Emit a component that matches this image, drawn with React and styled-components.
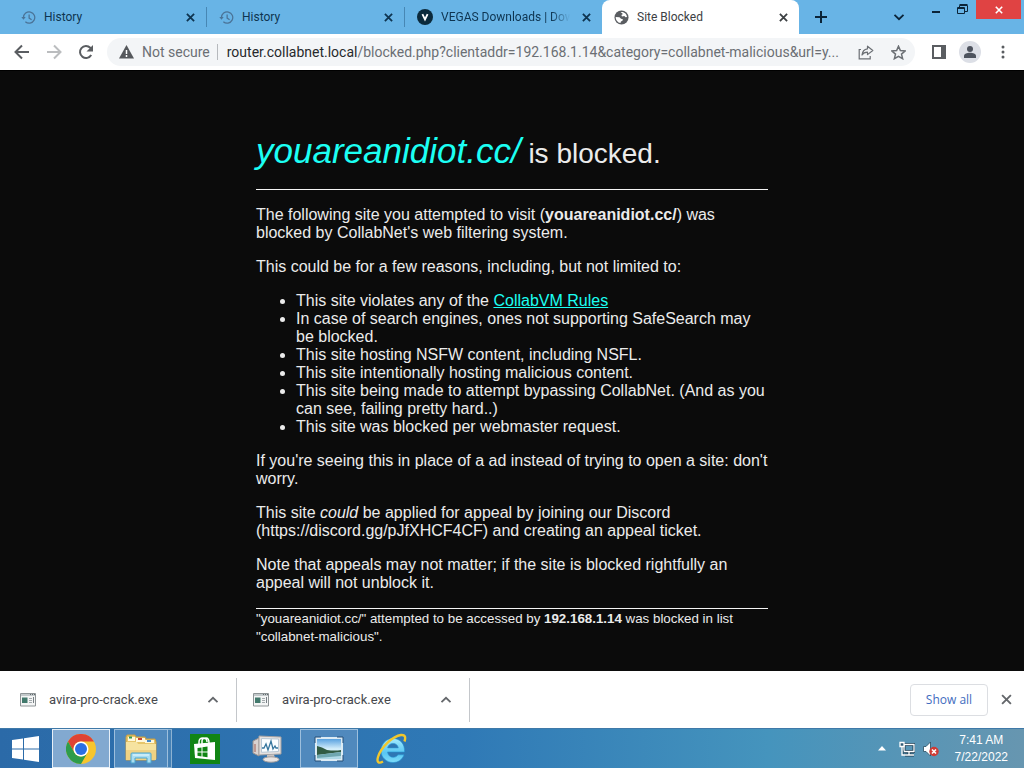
import React from 'react';
import styled, { createGlobalStyle, ThemeProvider } from 'styled-components';

const theme = {
  colors: {
    frame: '#68b4e6',
    page: '#0b0b0b',
    pageText: '#ebebeb',
    cyan: '#1cfff3',
    navy: '#0e3450',
    toolbar: '#ffffff',
    omnibox: '#f3f5f7',
    icon: '#5a5d61',
    grey: '#6b6f74',
    line: '#c4c7cb',
  },
  fonts: {
    ui: '"Open Sans", "Noto Sans", sans-serif',
    narrow: 'Roboto, "Open Sans", sans-serif',
    page: '"Liberation Sans", Arial, sans-serif',
  },
};

const GlobalStyle = createGlobalStyle`
  * {
    box-sizing: border-box;
  }

  body {
    margin: 0;
    background-color: #0b0b0b;
  }

  button, input {
    padding: 0;
    border: 0;
    background: none;
    font: inherit;
    color: inherit;
  }

  svg {
    display: block;
    flex: none;
  }
`;

const Desktop = styled.div`
  display: flex;
  flex-direction: column;
  min-height: 100vh;
  font-family: ${props => props.theme.fonts.ui};
`;

const TabStrip = styled.div`
  display: flex;
  align-items: flex-start;
  height: 34px;
  background-color: ${props => props.theme.colors.frame};
`;

const Tab = styled.div`
  display: flex;
  align-items: center;
  flex: 0 1 197px;
  min-width: 0;
  height: 34px;
  padding: 0 8px 0 12px;
  border-radius: ${props => (props.$active ? '8px 8px 0 0' : '0')};
  background-color: ${props => (props.$active ? props.theme.colors.toolbar : 'transparent')};
  color: ${props => (props.$active ? '#3c4043' : props.theme.colors.navy)};
  font-family: ${props => props.theme.fonts.narrow};
  font-size: 12px;

  &:first-child {
    flex-basis: 206px;
    padding-left: 21px;
  }
`;

const TabTitle = styled.button`
  flex: 1;
  min-width: 0;
  margin: 0 8px;
  overflow: hidden;
  text-align: left;
  white-space: nowrap;
  mask-image: ${props => (props.$fade ? 'linear-gradient(to right, #000 85%, transparent)' : 'none')};
`;

const TabDivider = styled.span`
  flex: none;
  width: 1px;
  height: 20px;
  margin-top: 7px;
  background-color: #4787b4;
`;

const IconButton = styled.button`
  display: flex;
  align-items: center;
  justify-content: center;
  flex: none;
  width: ${props => props.$width || 16}px;
  height: ${props => props.$height || 16}px;
  color: ${props => props.$color || 'inherit'};
`;

const StripActions = styled.div`
  display: flex;
  flex: 1;
  align-items: center;
  justify-content: space-between;
  height: 34px;
  padding: 0 16px 0 14px;
  color: #0b2438;
`;

const WindowButtons = styled.div`
  display: flex;
  color: #0b2438;
`;

const CloseWindow = styled.button`
  display: flex;
  align-items: center;
  justify-content: center;
  width: 45px;
  height: 19px;
  margin-right: 3px;
  margin-left: 1px;
  background-color: #e04343;
  color: #fff;
`;

const Toolbar = styled.div`
  display: flex;
  align-items: center;
  height: 37px;
  padding: 0 11px 0 10px;
  border-bottom: 1px solid #000;
  background-color: ${props => props.theme.colors.toolbar};
  color: ${props => props.theme.colors.icon};
`;

const NavButtons = styled.div`
  display: flex;
  gap: 8px;
`;

const Omnibox = styled.div`
  display: flex;
  align-items: center;
  flex: 1;
  min-width: 0;
  height: 28px;
  margin: 0 16px 0 9px;
  padding: 0 9px 0 12px;
  border-radius: 14px;
  background-color: ${props => props.theme.colors.omnibox};
  color: ${props => props.theme.colors.grey};
  font-family: ${props => props.theme.fonts.narrow};
  font-size: 14px;
`;

const SecurityLabel = styled.span`
  margin: 0 7px 0 8px;
  white-space: nowrap;
`;

const OmniboxDivider = styled.span`
  width: 1px;
  height: 16px;
  margin-right: 9px;
  background-color: #b6b9bd;
`;

const Address = styled.div`
  flex: 1;
  min-width: 0;
  white-space: nowrap;

  span {
    color: #27292c;
  }
`;

const OmniboxActions = styled.div`
  display: flex;
  gap: 16px;
  margin-left: 8px;
`;

const ToolbarActions = styled.div`
  display: flex;
  align-items: center;
  gap: 12px;
`;

const Avatar = styled.button`
  display: flex;
  align-items: center;
  justify-content: center;
  width: 22px;
  height: 22px;
  border-radius: 50%;
  background-color: #dcdfe6;
`;

const Page = styled.main`
  flex: 1;
  padding: 59px 0 25px;
  background-color: ${props => props.theme.colors.page};
  color: ${props => props.theme.colors.pageText};
  font-family: ${props => props.theme.fonts.page};
  font-size: 16px;
  line-height: 18px;
`;

const Article = styled.article`
  width: 50%;
  margin: 0 auto;

  p {
    margin: 16px 0;
  }

  ul {
    margin: 16px 0;
    padding-left: 40px;
  }

  a {
    color: ${props => props.theme.colors.cyan};
  }
`;

const Heading = styled.h1`
  margin: 0 0 15px;
  font-size: 28px;
  font-weight: 400;
  line-height: 41px;

  em {
    color: ${props => props.theme.colors.cyan};
    font-size: 35px;
  }
`;

const Rule = styled.hr`
  height: 1px;
  margin: 0;
  border: 0;
  background-color: #f4f4f4;
`;

const Footnote = styled.div`
  padding-top: 1px;
  font-size: smaller;
`;

const DownloadShelf = styled.div`
  display: flex;
  align-items: center;
  height: 57px;
  background-color: #fff;
  color: #47494d;
  font-size: 12px;
`;

const Download = styled.div`
  display: flex;
  align-items: center;
  flex: 0 1 233px;
  height: 44px;
  padding: 0 15px 0 16px;
  border-right: 1px solid ${props => props.theme.colors.line};

  &:first-child {
    flex-basis: 237px;
    padding-left: 20px;
  }
`;

const FileName = styled.button`
  flex: 1;
  margin-left: 13px;
  font-family: ${props => props.theme.fonts.narrow};
  font-size: 13px;
  text-align: left;
`;

const ShelfActions = styled.div`
  display: flex;
  align-items: center;
  gap: 10px;
  margin-left: auto;
  padding-right: 10px;
`;

const ShowAll = styled.button`
  width: 78px;
  height: 32px;
  border: 1px solid #dcdee2;
  border-radius: 4px;
  color: #3f6cc0;
  font-weight: 500;
`;

const Taskbar = styled.div`
  display: flex;
  align-items: stretch;
  height: 40px;
  background: linear-gradient(to right, #2b6aa8, #2f79b6 45%, #4594bd 75%, #6796b0);
  border-top: 1px solid #3f79a8;
`;

const TaskButton = styled.button`
  display: flex;
  align-items: center;
  justify-content: center;
  flex: none;
  width: ${props => props.$width || 58}px;
  margin-right: ${props => props.$gap || 0}px;
  border: 1px solid ${props => (props.$open ? '#9dbfdd' : 'transparent')};
  border-color: ${props => props.$active && '#e6eff7'};
  background-color: ${props => {
    if (props.$active) return '#82a9d0';
    return props.$open ? '#5089bd' : 'transparent';
  }};
`;

const StackEdge = styled.span`
  width: 4px;
  margin-right: 4px;
  border: 1px solid #8db2d2;
  border-left: 0;
  background-color: #4480b5;
`;

const Tray = styled.div`
  display: flex;
  align-items: center;
  margin-left: auto;
  padding-right: 16px;
  color: #fff;
`;

const TrayIcons = styled.div`
  display: flex;
  align-items: center;
  gap: 8px;
  margin-right: 16px;
`;

const Clock = styled.div`
  font-family: ${props => props.theme.fonts.page};
  font-size: 12px;
  line-height: 17px;
  text-align: center;
`;

const HistoryIcon = () => (
  <svg width="15" height="15" viewBox="0 0 24 24" fill="none" stroke="#4a7397" strokeWidth="2">
    <path d="M4 12a9 9 0 1 1 3 6.7" />
    <path d="M0.500 11h7L4 15.500z" fill="#4a7397" stroke="none" />
    <path d="M13 7v6l4 2.500" />
  </svg>
);

const VegasIcon = () => (
  <svg width="16" height="16" viewBox="0 0 16 16">
    <circle cx="8" cy="8" r="8" fill="#0b2a3c" />
    <path d="M5.400 5.200l2.600 5.300 2.600-5.300" fill="none" stroke="#fff" strokeWidth="1.800" />
  </svg>
);

const GlobeIcon = () => (
  <svg width="15" height="15" viewBox="0 0 16 16">
    <circle cx="8" cy="8" r="7.500" fill="#5a5d61" />
    <path d="M7 2.200c3.500-1 6.800 2 6.900 5.300l-1.600.2-1.300-1.200-2.500.3-.6-1.500 1.600-1.100zM1.800 7.400l4 .3 1.700 1.600 2 .5-.5 1.700-1.600.7-.5 1.700c-2.800-.4-5.100-3.200-5.100-6.500z" fill="#fff" />
  </svg>
);

const CrossIcon = ({ size = 9, weight = 2 }) => (
  <svg width={size} height={size} viewBox="0 0 10 10" stroke="currentColor" strokeWidth={weight}>
    <path d="M1 1l8 8M9 1L1 9" />
  </svg>
);

const PlusIcon = () => (
  <svg width="12" height="12" viewBox="0 0 12 12" stroke="currentColor" strokeWidth="2">
    <path d="M6 0v12M0 6h12" />
  </svg>
);

const ChevronIcon = ({ up }) => (
  <svg width="12" height="8" viewBox="0 0 12 8" fill="none" stroke="currentColor" strokeWidth="1.800">
    <path d={up ? 'M1.500 6.200L6 1.800l4.500 4.400' : 'M1.500 1.800L6 6.200l4.500-4.400'} />
  </svg>
);

const MinimizeIcon = () => (
  <svg width="8" height="3" viewBox="0 0 8 3">
    <path d="M0 0h8v2H0z" fill="currentColor" />
  </svg>
);

const RestoreIcon = () => (
  <svg width="11" height="11" viewBox="0 0 11 11" fill="none" stroke="currentColor">
    <path d="M.5 3.500h7v6h-7zM.5 4.500h7M2.500 3V1.500h8v6H8M2.500.5h8" />
  </svg>
);

const ArrowIcon = ({ forward }) => (
  <svg width="16" height="16" viewBox="0 0 16 16" fill="none" stroke="currentColor" strokeWidth="2">
    <path d={forward ? 'M1 8h13M8 1.500L14.500 8 8 14.500' : 'M15 8H2M8 1.500L1.500 8 8 14.500'} />
  </svg>
);

const ReloadIcon = () => (
  <svg width="16" height="16" viewBox="0 0 16 16">
    <path d="M13.200 11A6 6 0 1 1 12.300 3.800L14 5.500" fill="none" stroke="currentColor" strokeWidth="2" />
    <path d="M15 1v6.500H8.500z" fill="currentColor" />
  </svg>
);

const WarningIcon = () => (
  <svg width="15" height="14" viewBox="0 0 15 14">
    <path d="M7.500 0L15 13.500H0z" fill="#55585c" />
    <path d="M7.500 5v4M7.500 10v2" stroke="#fff" strokeWidth="1.500" />
  </svg>
);

const ShareIcon = () => (
  <svg width="16" height="15" viewBox="0 0 16 15" fill="none" stroke="currentColor" strokeWidth="1.200">
    <path d="M3 4.500H1.200v9.300h11V11" />
    <path d="M9.500 1.200L14.800 5.500 9.500 9.600V7.200C7 7.200 5.200 8 4 10c.3-3.300 2.200-5.700 5.500-6.200z" strokeLinejoin="round" />
  </svg>
);

const StarIcon = () => (
  <svg width="15" height="15" viewBox="0 0 16 16" fill="none" stroke="currentColor" strokeWidth="1.600">
    <path d="M8 1.300l2 4.600 5 .5-3.800 3.300 1.200 4.900L8 12l-4.400 2.600 1.200-4.900L1 6.400l5-.5z" />
  </svg>
);

const SidePanelIcon = () => (
  <svg width="14" height="14" viewBox="0 0 14 14">
    <path d="M1 1h12v12H1z" fill="none" stroke="currentColor" strokeWidth="2" />
    <path d="M9 1h4v12H9z" fill="currentColor" />
  </svg>
);

const PersonIcon = () => (
  <svg width="12" height="12" viewBox="0 0 12 12" fill="#4d535e">
    <circle cx="6" cy="3" r="3" />
    <path d="M0 12v-2c0-2 3-3.200 6-3.200s6 1.200 6 3.200v2z" />
  </svg>
);

const MenuIcon = () => (
  <svg width="4" height="14" viewBox="0 0 4 14" fill="currentColor">
    <circle cx="2" cy="2" r="1.500" />
    <circle cx="2" cy="7" r="1.500" />
    <circle cx="2" cy="12" r="1.500" />
  </svg>
);

const ExeIcon = () => (
  <svg width="16" height="14" viewBox="0 0 16 14">
    <path d="M.5.5h15v12.500H.5z" fill="#f4f5f5" stroke="#8e9496" />
    <path d="M1 1h14v2H1z" fill="#c3c9cb" />
    <path d="M10 1.500h1M12 1.500h1M14 1.500h1" stroke="#60686c" />
    <path d="M2 4.500h5.500V10H2z" fill="#42796c" />
    <path d="M9 5.500h3M9 7.500h3M9 9.500h3" stroke="#a3aaad" />
    <path d="M13.500 4v6" stroke="#777f84" />
  </svg>
);

const WindowsIcon = () => (
  <svg width="27" height="26" viewBox="0 0 27 26" fill="#fff">
    <path d="M0 4l11-1.600V12.500H0zM12 2.200L27 0v12.500H12zM0 13.500h11v10.100L0 22zM12 13.500h15V26l-15-2.200z" />
  </svg>
);

const ChromeIcon = () => (
  <svg width="30" height="30" viewBox="0 0 30 30">
    <circle cx="15" cy="15" r="15" fill="#f7c52c" />
    <path d="M2 7.500A15 15 0 0 1 28 7.500H15A7.500 7.500 0 0 0 8.500 18.800z" fill="#df4334" />
    <path d="M2 7.500A15 15 0 0 0 15 30L21.500 18.800A7.500 7.500 0 0 1 8.500 18.800z" fill="#2d9c4b" />
    <circle cx="15" cy="15" r="7.500" fill="#fff" />
    <circle cx="15" cy="15" r="6" fill="#2b6fe3" />
  </svg>
);

const FolderIcon = () => (
  <svg width="32" height="30" viewBox="0 0 32 30">
    <path d="M1 3l1-2h8l1 2h9l1 2h9l1 3v17l-1 1H1z" fill="#e7c66b" stroke="#c69c43" />
    <path d="M3 3h7v4H3zM11 4h9v4h-9zM20 6h9v3h-9z" fill="#fff8dc" />
    <path d="M4 3.500h3" stroke="#2d9b57" strokeWidth="2" />
    <path d="M13 5h4" stroke="#c94335" strokeWidth="2" />
    <path d="M22 7h4" stroke="#4389c9" strokeWidth="2" />
    <path d="M1 8h11l1 2h18v16H1z" fill="#f6e3a0" />
    <path d="M1 16h30v10H1z" fill="#efd283" />
    <path d="M6 29V20q0-1 1-1h18q1 0 1 1v9h-4v-5H10v5z" fill="#a9ddf1" stroke="#4ba5ce" />
    <path d="M8 21h16" stroke="#e9faff" />
  </svg>
);

const StoreIcon = () => (
  <svg width="30" height="30" viewBox="0 0 30 30">
    <path d="M0 0h30v30H0z" fill="#118514" />
    <path d="M9 11V8q0-4 4-4t4 4M12 10V7q0-3 4-3 3 0 3 5" fill="none" stroke="#fff" strokeWidth="1.500" />
    <path d="M4 10l21-2v18L5 24z" fill="#fff" />
    <path d="M7.500 14l4-.6v4h-4zM12.500 13.200l5-.7v4.900h-5zM7.500 18.400h4v4l-4-.6zM12.500 18.400h5v4.900l-5-.7z" fill="#118514" />
  </svg>
);

const MonitorIcon = () => (
  <svg width="30" height="28" viewBox="0 0 30 28">
    <path d="M1 6l6-3v18l-6-3z" fill="#d9d2d0" stroke="#98908f" />
    <path d="M3 9v8" stroke="#a15c52" />
    <path d="M7 1l22 1v17L7 20z" fill="#e5e1df" stroke="#a5a2a2" />
    <path d="M9.500 3.500l17 .5v12.500l-17 .8z" fill="#fafdff" stroke="#b8c8d5" />
    <path d="M10 13h2l2-4 2 6 3-9 2 8 2-3 1 2h2" fill="none" stroke="#36759d" strokeWidth="1.300" />
    <path d="M15 20l7-.5 1 3.500h-8z" fill="#c9c4c2" />
    <ellipse cx="19" cy="24.500" rx="8" ry="2.700" fill="#e8e4e2" stroke="#9c9898" />
  </svg>
);

const PhotoIcon = () => (
  <svg width="30" height="26" viewBox="0 0 30 26">
    <defs>
      <linearGradient id="sky" x2="0" y2="1">
        <stop offset="0" stopColor="#4d9add" />
        <stop offset="0.500" stopColor="#d5effb" />
        <stop offset="1" stopColor="#a6d4e2" />
      </linearGradient>
    </defs>
    <path d="M2 2h26v22H2z" fill="url(#sky)" stroke="#dcebf4" strokeWidth="2" />
    <path d="M3 10q5 1 10 4 8 1 14 0v2L3 19z" fill="#315b43" />
    <path d="M3 19l24-3v4L3 22z" fill="#6fa7b0" />
    <path d="M1 7V1h6M23 1h6v6M29 19v6h-6M7 25H1v-6" fill="none" stroke="#244e78" />
  </svg>
);

const ExplorerIcon = () => (
  <svg width="32" height="32" viewBox="0 0 32 32">
    <defs>
      <linearGradient id="explorer" x2="0" y2="1">
        <stop offset="0" stopColor="#a5ebfd" />
        <stop offset="0.600" stopColor="#58c6f3" />
        <stop offset="1" stopColor="#7ddcf9" />
      </linearGradient>
    </defs>
    <path
      d="M29.500 19H12.500C13 22.500 15.300 24.300 18.200 24.300 20.500 24.300 22 23.300 22.900 21.800H29C27.300 26.600 23.300 29.500 18 29.500 11.300 29.500 6 24.300 6 17.700 6 11 11.300 5.500 18 5.500 25.200 5.500 30 11 29.500 19zM12.600 14.900H23.300C22.800 12 20.800 10.400 18 10.400 15.300 10.400 13.200 12 12.600 14.900z"
      fill="url(#explorer)"
      fillRule="evenodd"
      stroke="#2794d2"
      strokeWidth="0.600"
    />
    <path d="M29.500 8.500C31 4 30 1.500 26 2 18 3 6 14 3 24c-1.500 5 .5 7 5 4.500" fill="none" stroke="#f1c72d" strokeWidth="2.400" />
  </svg>
);

const NetworkIcon = () => (
  <svg width="16" height="16" viewBox="0 0 16 16" fill="none">
    <path d="M5 3.500h10v7H5zM10 11v3M6 14h9" stroke="#173a50" strokeWidth="3" />
    <path d="M5 3.500h10v7H5zM10 11v3M6 14h9" stroke="#fff" strokeWidth="1.300" />
    <path d="M1 1.500h4v4H1zM3 6v8h3" fill="#315d77" stroke="#fff" strokeWidth="1.300" />
  </svg>
);

const MutedIcon = () => (
  <svg width="16" height="16" viewBox="0 0 16 16">
    <path d="M.5 5.500H3L7.500 1v14L3 10.500H.5z" fill="#fff" stroke="#284c60" strokeWidth="0.800" />
    <circle cx="11" cy="10.500" r="4.700" fill="#cf3b35" />
    <path d="M9 8.500l4 4M13 8.500l-4 4" stroke="#fff" strokeWidth="1.600" />
  </svg>
);

const TrayArrowIcon = () => (
  <svg width="8" height="5" viewBox="0 0 8 5">
    <path d="M4 0l4 4.500H0z" fill="#fff" />
  </svg>
);

const tabs = [
  { id: 1, title: 'History', icon: <HistoryIcon />, divider: true },
  { id: 2, title: 'History', icon: <HistoryIcon />, divider: true },
  { id: 3, title: 'VEGAS Downloads | Dow', icon: <VegasIcon />, fade: true },
  { id: 4, title: 'Site Blocked', icon: <GlobeIcon />, active: true },
];

const downloads = [
  { id: 1, name: 'avira-pro-crack.exe' },
  { id: 2, name: 'avira-pro-crack.exe' },
];

const BrowserTabs = () => (
  <TabStrip>
    {tabs.map(tab => (
      <React.Fragment key={tab.id}>
        <Tab $active={tab.active}>
          {tab.icon}
          <TabTitle $fade={tab.fade}>{tab.title}</TabTitle>
          <IconButton aria-label="Close tab">
            <CrossIcon />
          </IconButton>
        </Tab>
        {tab.divider && <TabDivider />}
      </React.Fragment>
    ))}
    <StripActions>
      <IconButton aria-label="New tab">
        <PlusIcon />
      </IconButton>
      <IconButton aria-label="Search tabs">
        <ChevronIcon />
      </IconButton>
    </StripActions>
    <WindowButtons>
      <IconButton $width={26} $height={25} aria-label="Minimize">
        <MinimizeIcon />
      </IconButton>
      <IconButton $width={26} $height={19} aria-label="Restore">
        <RestoreIcon />
      </IconButton>
      <CloseWindow aria-label="Close">
        <CrossIcon size={8} />
      </CloseWindow>
    </WindowButtons>
  </TabStrip>
);

const BrowserToolbar = () => (
  <Toolbar>
    <NavButtons>
      <IconButton $width={24} $height={24} aria-label="Back">
        <ArrowIcon />
      </IconButton>
      <IconButton $width={24} $height={24} $color="#bbbdbf" aria-label="Forward">
        <ArrowIcon forward />
      </IconButton>
      <IconButton $width={24} $height={24} aria-label="Reload">
        <ReloadIcon />
      </IconButton>
    </NavButtons>
    <Omnibox>
      <WarningIcon />
      <SecurityLabel>Not secure</SecurityLabel>
      <OmniboxDivider />
      <Address>
        <span>router.collabnet.local</span>
        /blocked.php?clientaddr=192.168.1.14&amp;category=collabnet-malicious&amp;url=y...
      </Address>
      <OmniboxActions>
        <IconButton aria-label="Share">
          <ShareIcon />
        </IconButton>
        <IconButton aria-label="Bookmark">
          <StarIcon />
        </IconButton>
      </OmniboxActions>
    </Omnibox>
    <ToolbarActions>
      <IconButton aria-label="Side panel">
        <SidePanelIcon />
      </IconButton>
      <Avatar aria-label="Profile">
        <PersonIcon />
      </Avatar>
      <IconButton $width={20} aria-label="Menu">
        <MenuIcon />
      </IconButton>
    </ToolbarActions>
  </Toolbar>
);

const BlockedPage = () => (
  <Page>
    <Article>
      <Heading>
        <em>youareanidiot.cc/</em> is blocked.
      </Heading>
      <Rule />
      <p>
        The following site you attempted to visit (<b>youareanidiot.cc/</b>) was
        blocked by CollabNet's web filtering system.
      </p>
      <p>This could be for a few reasons, including, but not limited to:</p>
      <ul>
        <li>
          This site violates any of the <a href="#rules">CollabVM Rules</a>
        </li>
        <li>In case of search engines, ones not supporting SafeSearch may be blocked.</li>
        <li>This site hosting NSFW content, including NSFL.</li>
        <li>This site intentionally hosting malicious content.</li>
        <li>
          This site being made to attempt bypassing CollabNet. (And as you can
          see, failing pretty hard..)
        </li>
        <li>This site was blocked per webmaster request.</li>
      </ul>
      <p>If you're seeing this in place of a ad instead of trying to open a site: don't worry.</p>
      <p>
        This site <i>could</i> be applied for appeal by joining our Discord
        (https://discord.gg/pJfXHCF4CF) and creating an appeal ticket.
      </p>
      <p>
        Note that appeals may not matter; if the site is blocked rightfully an
        appeal will not unblock it.
      </p>
      <Rule />
      <Footnote>
        "youareanidiot.cc/" attempted to be accessed by <b>192.168.1.14</b> was
        blocked in list "collabnet-malicious".
      </Footnote>
    </Article>
  </Page>
);

const Downloads = () => (
  <DownloadShelf>
    {downloads.map(download => (
      <Download key={download.id}>
        <ExeIcon />
        <FileName>{download.name}</FileName>
        <IconButton $color="#64676b" aria-label="Download options">
          <ChevronIcon up />
        </IconButton>
      </Download>
    ))}
    <ShelfActions>
      <ShowAll>Show all</ShowAll>
      <IconButton $color="#64676b" aria-label="Close downloads">
        <CrossIcon size={11} weight={1.7} />
      </IconButton>
    </ShelfActions>
  </DownloadShelf>
);

const WindowsTaskbar = () => (
  <Taskbar>
    <TaskButton $width={50} $gap={2} aria-label="Start">
      <WindowsIcon />
    </TaskButton>
    <TaskButton $gap={4} $open $active aria-label="Chrome">
      <ChromeIcon />
    </TaskButton>
    <TaskButton $width={54} $open aria-label="File Explorer">
      <FolderIcon />
    </TaskButton>
    <StackEdge />
    <TaskButton $gap={4} aria-label="Store">
      <StoreIcon />
    </TaskButton>
    <TaskButton $gap={4} aria-label="Task Manager">
      <MonitorIcon />
    </TaskButton>
    <TaskButton $gap={4} $open aria-label="Photos">
      <PhotoIcon />
    </TaskButton>
    <TaskButton aria-label="Internet Explorer">
      <ExplorerIcon />
    </TaskButton>
    <Tray>
      <TrayIcons>
        <IconButton $width={18} aria-label="Show hidden icons">
          <TrayArrowIcon />
        </IconButton>
        <NetworkIcon />
        <MutedIcon />
      </TrayIcons>
      <Clock>
        <div>7:41 AM</div>
        <div>7/22/2022</div>
      </Clock>
    </Tray>
  </Taskbar>
);

const App = () => (
  <ThemeProvider theme={theme}>
    <GlobalStyle />
    <Desktop>
      <BrowserTabs />
      <BrowserToolbar />
      <BlockedPage />
      <Downloads />
      <WindowsTaskbar />
    </Desktop>
  </ThemeProvider>
);

export default App;
